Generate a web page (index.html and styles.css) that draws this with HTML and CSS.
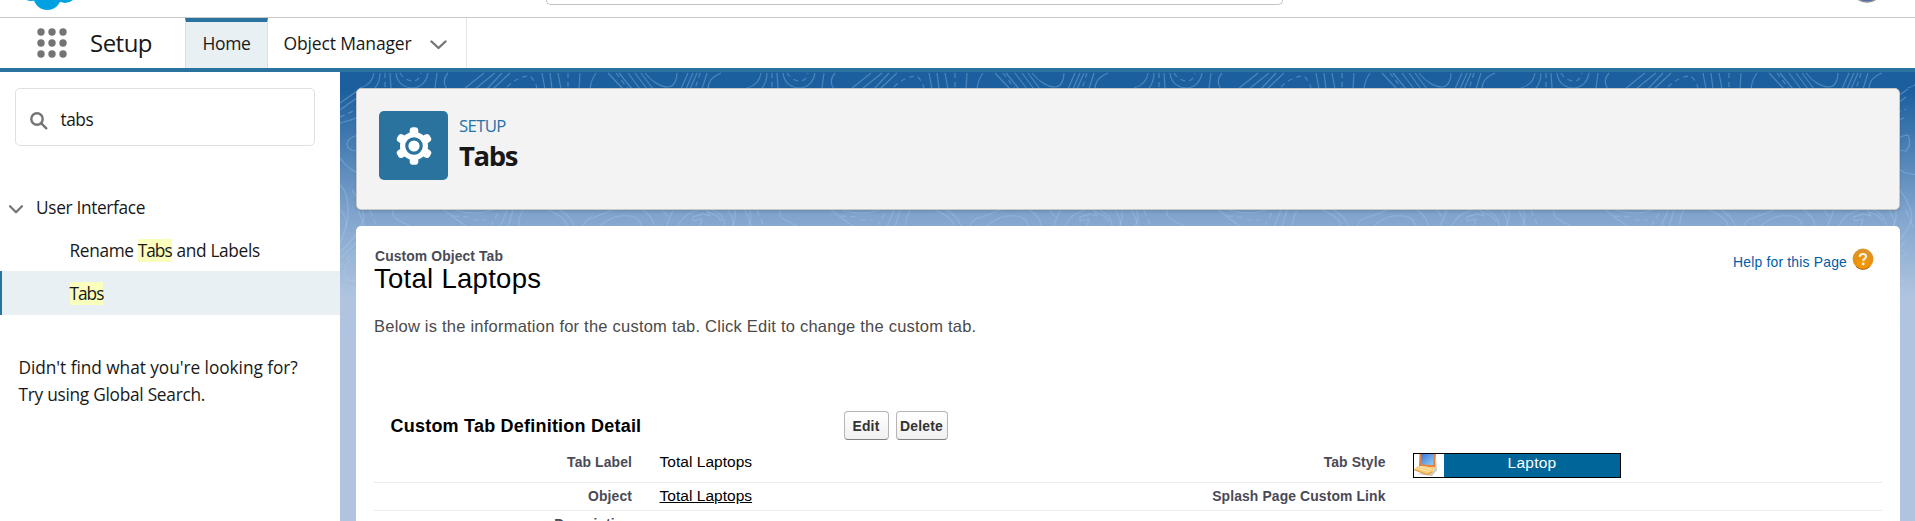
FILE: index.html
```
<!DOCTYPE html>
<html lang="en">
<head>
<meta charset="utf-8">
<title>Tabs | Setup</title>
<link rel="stylesheet" href="styles.css">
</head>
<body>
<header class="global">
  <svg class="cloud" width="60" height="14" viewBox="20 0 60 14"><g fill="#00a1e0"><circle cx="47.300" cy="-4" r="14"/><circle cx="65" cy="-9" r="12"/><circle cx="31" cy="-10" r="11"/></g></svg>
  <div class="global-search"></div>
  <svg class="avatar" width="36" height="4" viewBox="0 0 36 4"><circle cx="18" cy="-14" r="16" fill="#4a6db0" stroke="#8d8f94" stroke-width="1.500"/></svg>
</header>
<nav class="context">
  <svg class="launcher" width="30" height="30" viewBox="0 0 30 30"><g fill="#747474"><circle cx="4" cy="4" r="3.700"/><circle cx="15" cy="4" r="3.700"/><circle cx="26" cy="4" r="3.700"/><circle cx="4" cy="15" r="3.700"/><circle cx="15" cy="15" r="3.700"/><circle cx="26" cy="15" r="3.700"/><circle cx="4" cy="26" r="3.700"/><circle cx="15" cy="26" r="3.700"/><circle cx="26" cy="26" r="3.700"/></g></svg>
  <span class="app-name">Setup</span>
  <a class="tab tab-active">Home</a>
  <a class="tab tab-objects"><span>Object Manager</span>
    <svg width="17" height="10" viewBox="0 0 17 10"><path d="M1.500 1.500 8.500 8 15.500 1.500" fill="none" stroke="#747474" stroke-width="2.300" stroke-linecap="round" stroke-linejoin="round"/></svg></a>
</nav>
<div class="body">
  <aside class="side">
    <div class="find">
      <svg width="18" height="18" viewBox="0 0 18 18"><circle cx="7" cy="7" r="5.700" fill="none" stroke="#747474" stroke-width="2.400"/><path d="M11.300 11.300 16.300 16.300" stroke="#747474" stroke-width="2.400" stroke-linecap="round"/></svg>
      <span>tabs</span>
    </div>
    <div class="node">
      <svg width="14" height="9" viewBox="0 0 14 9"><path d="M1 1.200 7 7.300 13 1.200" fill="none" stroke="#747474" stroke-width="2.200" stroke-linecap="round" stroke-linejoin="round"/></svg>
      <span>User Interface</span>
    </div>
    <div class="leaf">Rename <mark>Tabs</mark> and Labels</div>
    <div class="leaf leaf-active"><mark>Tabs</mark></div>
    <p class="hint"><span class="hint-first">Didn't find what you're looking for?</span><br>Try using Global Search.</p>
  </aside>
  <main class="stage">
    <svg class="topo" width="1575" height="449">
      <defs>
        <pattern id="contours" width="387" height="449" patternUnits="userSpaceOnUse">
          <g fill="none" stroke="#a9cdf2" stroke-opacity=".34" stroke-width="1.200">
            <path d="M34 1Q32 13 20 16M40 1Q40 10 35 16M50 1 51 16M56 1C57 12 66 16 72 16 82 16 87 8 88 1M97 1 95 16M108 1Q101 9 107 17M144 1 124 17M155 1 135 17M162 1 147 17M170 1 153 17M202 1 205 17M210 1 212 17M218 1 221 17M240 1 239 17M256 1Q251 8 250 17M268 1 283 17M279 1 292 17M288 1 300 17M295 1 307 17M301 1 313 17M305 1C312 10 321 15 328 15 335 15 337 6 337 1M348 1 341 17M353 1 346 17M357 1 350 17M367 1 362 17M381 1Q368 6 368 17"/>
            <path stroke-dasharray="5 4" d="M45 1V17M60 1C63 6 68 9 73 9 78 9 80 5 81 1M167 15C175 7 183 4 190 4 194 8 196 12 197 16M228 1V17M276 1 288 17M360 1 355 17"/>
            <path d="M0 31 20 17M0 38 18 25M0 51Q9 49 16 46M20 63Q7 65 7 73 8 79 18 79 24 72 20 63M0 86Q8 97 18 101L30 103M0 113Q9 120 8 146 5 160 0 172M12 118Q24 134 24 147 18 164 0 180M0 187 18 169M20 181Q4 190 4 200 5 211 17 208M0 212Q8 213 17 218M0 225Q8 226 17 231M0 238Q8 238 17 243M3 268Q3 254 17 252"/>
            <path stroke-dasharray="5 4" d="M0 45 18 37M0 194 18 175M0 218 17 223"/>
            <path d="M1 138Q8 148 6 156M18 138 25 155M53 138Q51 145 60 149L70 154M104 138 127 155M115 138Q135 144 152 138M167 138 160 155M173 138 168 155M183 138Q178 146 179 155M208 138Q227 146 227 155M220 138Q233 146 234 155M243 154Q246 146 255 145 268 140 275 137M260 154Q270 145 280 144 301 142 301 155M303 138Q314 146 314 155M333 138 326 155M323 138 328 145M338 154Q343 142 358 138M372 138Q385 143 385 155M353 149 353 145 363 142 370 144 367 139 377 144 382 149M353 149 362 147 360 154"/>
            <path stroke-dasharray="6 4" d="M30 138 37 155M113 144 129 145M133 148 146 148M158 141 151 153"/>
          </g>
        </pattern>
      </defs>
      <rect y="0" width="1575" height="272" fill="url(#contours)"/>
    </svg>
    <section class="card page-head">
      <div class="badge"><svg width="36" height="38" viewBox="-18 -19 36 38"><g fill="#fff"><circle r="14"/><rect x="-4.300" y="-18.800" width="8.600" height="37.600" rx="3.400"/><rect x="-4.300" y="-18.800" width="8.600" height="37.600" rx="3.400" transform="rotate(60)"/><rect x="-4.300" y="-18.800" width="8.600" height="37.600" rx="3.400" transform="rotate(120)"/></g><circle r="7.200" fill="#fff" stroke="#2a739e" stroke-width="3.200"/></svg></div>
      <div class="titles"><div class="eyebrow">SETUP</div><h1>Tabs</h1></div>
    </section>
    <section class="card detail">
      <div class="detail-top">
        <div>
          <div class="kind">Custom Object Tab</div>
          <h2>Total Laptops</h2>
        </div>
        <a class="help"><span>Help for this Page</span>
          <svg width="22" height="22" viewBox="0 0 22 22"><defs><radialGradient id="amber" cx=".5" cy=".75" r=".7"><stop offset="0" stop-color="#f79a04"/><stop offset=".6" stop-color="#e8910f"/><stop offset="1" stop-color="#d9952f"/></radialGradient></defs><circle cx="11" cy="11" r="10.400" fill="url(#amber)"/><path d="M4 18.500A10 10 0 0 0 18 18.500" fill="none" stroke="#a8681a" stroke-width="1"/><path d="M7.800 8.800Q7.900 6 11 6T14 8.600Q14 10 12.300 11 11.200 11.700 11.200 13" fill="none" stroke="#fff3df" stroke-width="2.200"/><circle cx="11.200" cy="15.900" r="1.400" fill="#fff3df"/></svg></a>
      </div>
      <p class="intro">Below is the information for the custom tab. Click Edit to change the custom tab.</p>
      <div class="bar"><h3>Custom Tab Definition Detail</h3><button class="btn btn-edit">Edit</button><button class="btn btn-delete">Delete</button></div>
      <div class="row row-first"><span class="label">Tab Label</span><span class="value">Total Laptops</span><span class="label">Tab Style</span>
        <div class="style-chip"><svg width="30" height="23" viewBox="0 0 30 23"><defs><linearGradient id="screen" x2="1" y2="1"><stop offset="0" stop-color="#3d74d6"/><stop offset="1" stop-color="#8fd0f5"/></linearGradient></defs><path d="M3 20 18 22 23 16 22 5 20 17Z" fill="#c9c9cc"/><path d="M5.500-1H22L21 13.500 5 12Z" fill="#e8823a"/><path d="M7.500 0H19.500L19 11 7 10.500Z" fill="url(#screen)"/><path d="M4.500 12 21 13.500 18 19.500 13 20.500 0 15.500Z" fill="#f8cc74"/><path d="M0 15.500 13 20.500 18 18" fill="none" stroke="#e6a04a" stroke-width="1.200"/><path d="M4 14.500 16 17.500M6 13 18 15.500" stroke="#fbe7b8" stroke-width="1"/></svg><span>Laptop</span></div></div>
      <div class="row"><span class="label">Object</span><span class="value"><a>Total Laptops</a></span><span class="label">Splash Page Custom Link</span></div>
      <div class="row"><span class="label">Description</span></div>
    </section>
  </main>
</div>
</body>
</html>
```
FILE: styles.css
```
* { box-sizing: border-box; }
html, body { height: 521px; overflow: hidden; }
body { margin: 0; background: #fff; color: #181818; font: 17.3px "Open Sans", "Noto Sans", sans-serif; display: flex; flex-direction: column; }
h1, h2, h3, p { margin: 0; }
svg { display: block; flex: none; }

.global { height: 18px; flex: none; border-bottom: 1px solid #c9c9c9; display: flex; align-items: flex-start; }
.cloud { margin-left: 20px; }
.global-search { margin-left: 466px; width: 737px; height: 5px; border: 1px solid #c2c2c2; border-top: 0; border-radius: 0 0 5px 5px; }
.avatar { margin-left: 566px; }

.context { height: 54px; flex: none; border-bottom: 4px solid #2a739e; display: flex; }
.launcher { margin: 10px 0 0 36.500px; }
.app-name { width: 95px; margin-left: 23.500px; font-size: 24px; line-height: 50px; letter-spacing: -.52px; }
.tab { height: 50px; font-size: 17.5px; line-height: 42px; }
.tab-active { width: 83px; background: #e8f0f4; border-top: 4px solid #2a739e; border-left: 1px solid #d9dfe3; border-right: 1px solid #d9dfe3; padding-left: 16.500px; letter-spacing: -.36px; }
.tab-objects { width: 199px; border-right: 1px solid #e5e5e5; padding: 4px 0 0 15.500px; display: flex; letter-spacing: -.15px; }
.tab-objects svg { margin: 18px 0 0 18.500px; }

.body { flex: 1; display: flex; min-height: 0; }
.side { width: 340px; flex: none; padding-top: 16px; }
.find { width: 300px; height: 58px; margin-left: 15px; border: 1px solid #e0e0e0; border-radius: 5px; display: flex; padding-left: 14px; letter-spacing: -.45px; line-height: 61px; }
.find svg { margin: 22.500px 12.500px 0 0; }
.node { height: 43px; margin-top: 44px; padding-left: 9px; display: flex; line-height: 35px; letter-spacing: -.34px; }
.node svg { margin: 14.500px 13px 0 0; }
.leaf { height: 38px; line-height: 35px; padding-left: 69.500px; letter-spacing: -.36px; }
.leaf-active { height: 44px; line-height: 45px; background: #e8f0f4; border-left: 2px solid #2a739e; padding-left: 67.500px; }
mark { background: #faffbd; color: inherit; letter-spacing: -1px; margin-right: .8px; }
.hint { padding: 39px 0 0 18.500px; line-height: 27px; letter-spacing: -.27px; }
.hint-first { letter-spacing: -.05px; }

.stage { flex: 1; position: relative; padding: 16px 15px 0 16px; background: linear-gradient(#1b5f9e 0, #1b5f9e 18px, #7fa3cc 140px, #b0c4df 225px, #b0c4df 100%); }
.topo { position: absolute; left: 0; top: 0; }
.card { position: relative; border-radius: 5px; }
.page-head { height: 122px; background: #f3f3f3; border: 1px solid #c9c9c9; box-shadow: 0 2px 3px rgba(0,0,0,.12); padding: 22px; display: flex; }
.badge { width: 69px; height: 69px; border-radius: 5px; background: #2a739e; display: grid; place-items: center; }
.titles { margin-left: 11px; padding-top: 2.500px; }
.eyebrow { color: #2574a9; font-size: 16.8px; line-height: 23px; letter-spacing: -.7px; }
h1 { font-size: 27.500px; line-height: 38px; letter-spacing: -1.400px; }

.detail { height: 320px; margin-top: 16px; background: #fff; font-family: "Liberation Sans", Arial, sans-serif; padding: 21px 18px 0 18px; }
.detail-top { display: flex; justify-content: space-between; height: 45px; }
.kind { margin-left: 1px; font-size: 13.900px; font-weight: 700; line-height: 18px; color: #4a4a56; letter-spacing: .1px; }
h2 { font-size: 27.500px; font-weight: 400; line-height: 27px; color: #000; letter-spacing: .28px; }
.help { display: flex; margin-right: 8px; color: #015ba7; font-size: 13.900px; line-height: 31px; letter-spacing: .2px; }
.help svg { margin: .5px 0 0 5px; }
.intro { margin-top: 24px; font-size: 16.500px; line-height: 20px; letter-spacing: .225px; color: #4a4a4a; }
.bar { margin-top: 75px; height: 34px; padding-left: 16.500px; display: flex; }
h3 { width: 453px; font-size: 18px; line-height: 29px; letter-spacing: .22px; color: #000; padding-top: 1px; }
.btn { height: 29px; margin: 0 7px 0 0; padding: 0; border: 1px solid #b5b5b5; border-bottom-color: #7f7f7f; border-radius: 4px; background: linear-gradient(#fff, #f0f0f0); font: 700 13.900px "Liberation Sans", Arial, sans-serif; letter-spacing: .2px; color: #333; }
.btn-edit { width: 45px; }
.btn-delete { width: 52px; }
.row { height: 28px; display: grid; grid-template-columns: 258px 495.500px 258px 1fr; border-bottom: 1px solid #ececec; padding-top: 2.500px; line-height: 20px; }
.row-first { height: 38px; padding-top: 6.500px; }
.label { text-align: right; font-size: 13.900px; font-weight: 700; color: #4a4a56; letter-spacing: .12px; }
.value { padding-left: 27.500px; font-size: 15.500px; color: #000; letter-spacing: .03px; }
.value a { text-decoration: underline; }
.style-chip { width: 208px; height: 25px; margin: 1.500px 0 0 27.500px; border: 1px solid #000; background: #069; display: flex; color: #fff; font-size: 15.500px; letter-spacing: .25px; line-height: 18px; }
.style-chip svg { background: #fff; }
.style-chip span { flex: 1; text-align: center; }
```
